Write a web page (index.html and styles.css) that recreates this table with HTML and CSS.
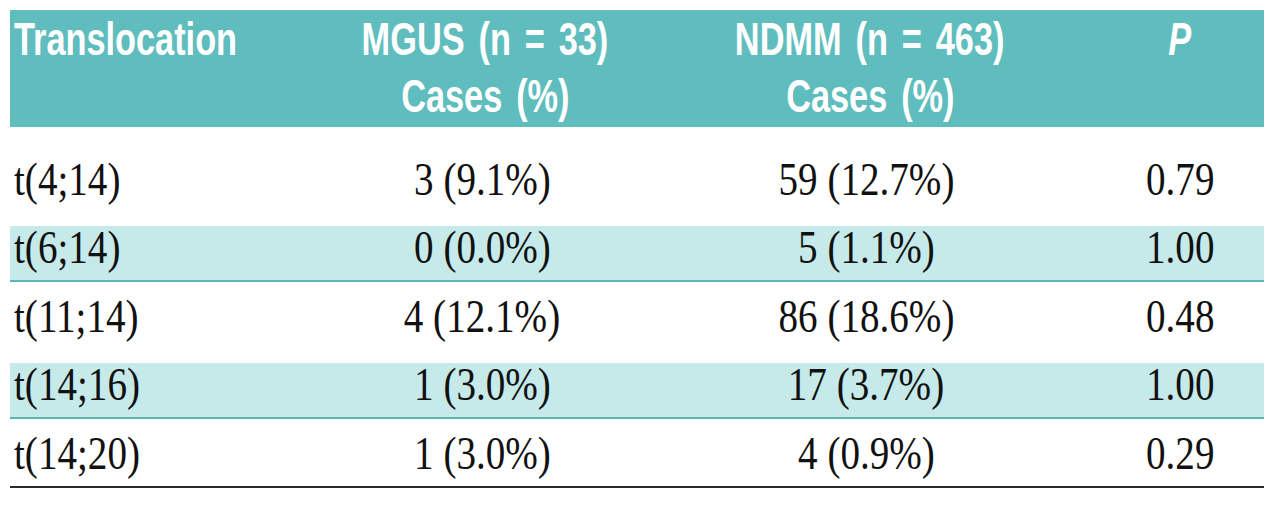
FILE: index.html
```html
<!DOCTYPE html>
<html lang="en">
<head>
<meta charset="utf-8">
<title>Translocations</title>
<link rel="stylesheet" href="styles.css">
</head>
<body>
<div class="table">
  <div class="head">
    <div class="hc c1"><span class="hs left">Translocation</span></div>
    <div class="hc c2"><span class="hs">MGUS (n = 33)</span><span class="hs">Cases (%)</span></div>
    <div class="hc c3"><span class="hs">NDMM (n = 463)</span><span class="hs">Cases (%)</span></div>
    <div class="hc c4"><span class="hs"><i>P</i></span></div>
  </div>
  <div class="rows">
    <div class="row">
      <div class="c c1"><span class="ts left">t(4;14)</span></div>
      <div class="c c2"><span class="ts">3 (9.1%)</span></div>
      <div class="c c3"><span class="ts">59 (12.7%)</span></div>
      <div class="c c4"><span class="ts">0.79</span></div>
    </div>
    <div class="row band">
      <div class="c c1"><span class="ts left">t(6;14)</span></div>
      <div class="c c2"><span class="ts">0 (0.0%)</span></div>
      <div class="c c3"><span class="ts">5 (1.1%)</span></div>
      <div class="c c4"><span class="ts">1.00</span></div>
    </div>
    <div class="row">
      <div class="c c1"><span class="ts left">t(11;14)</span></div>
      <div class="c c2"><span class="ts">4 (12.1%)</span></div>
      <div class="c c3"><span class="ts">86 (18.6%)</span></div>
      <div class="c c4"><span class="ts">0.48</span></div>
    </div>
    <div class="row band">
      <div class="c c1"><span class="ts left">t(14;16)</span></div>
      <div class="c c2"><span class="ts">1 (3.0%)</span></div>
      <div class="c c3"><span class="ts">17 (3.7%)</span></div>
      <div class="c c4"><span class="ts">1.00</span></div>
    </div>
    <div class="row last">
      <div class="c c1"><span class="ts left">t(14;20)</span></div>
      <div class="c c2"><span class="ts">1 (3.0%)</span></div>
      <div class="c c3"><span class="ts">4 (0.9%)</span></div>
      <div class="c c4"><span class="ts">0.29</span></div>
    </div>
  </div>
</div>
</body>
</html>
```

FILE: styles.css
```css
html, body {
  margin: 0;
  padding: 0;
  background: #ffffff;
}

.table {
  margin: 10px 16px 0 10px;
  width: 1254px;
}

.head {
  display: grid;
  grid-template-columns: 290px 370px 400px 194px;
  height: 117px;
  background: #5fbdbe;
  color: #ffffff;
  font-family: "Liberation Sans", Arial, sans-serif;
  font-weight: bold;
  font-size: 47px;
  line-height: 57px;
}

.hc {
  display: flex;
  flex-direction: column;
  align-items: center;
}

.hc.c1 {
  align-items: flex-start;
  padding-left: 4px;
}

.hc.c4 {
  padding-left: 26px;
}

.hs {
  display: inline-block;
  white-space: pre;
  transform: scaleX(0.73);
  transform-origin: center;
  word-spacing: 6px;
}

.hs.left {
  transform-origin: left;
}

.rows {
  padding-top: 18px;
}

.row {
  display: grid;
  grid-template-columns: 290px 370px 400px 194px;
  margin-top: 13px;
  height: 54px;
  border-bottom: 2px solid transparent;
  font-family: "Liberation Serif", "Times New Roman", serif;
  font-size: 46px;
  line-height: 44px;
  color: #111111;
}

.row.band {
  margin-top: 12px;
  background: #c6eaea;
  border-bottom-color: #5fb6b6;
}

.row.last {
  border-bottom-color: #2a2a2a;
}

.c {
  text-align: center;
  white-space: pre;
}

.c.c1 {
  text-align: left;
  padding-left: 4px;
}

.c.c2 {
  padding-right: 6px;
}

.c.c3 {
  padding-right: 8px;
}

.c.c4 {
  padding-left: 26px;
}

.ts {
  display: inline-block;
  transform: scaleX(0.85);
  transform-origin: center;
}

.ts.left {
  transform-origin: left;
}
```
